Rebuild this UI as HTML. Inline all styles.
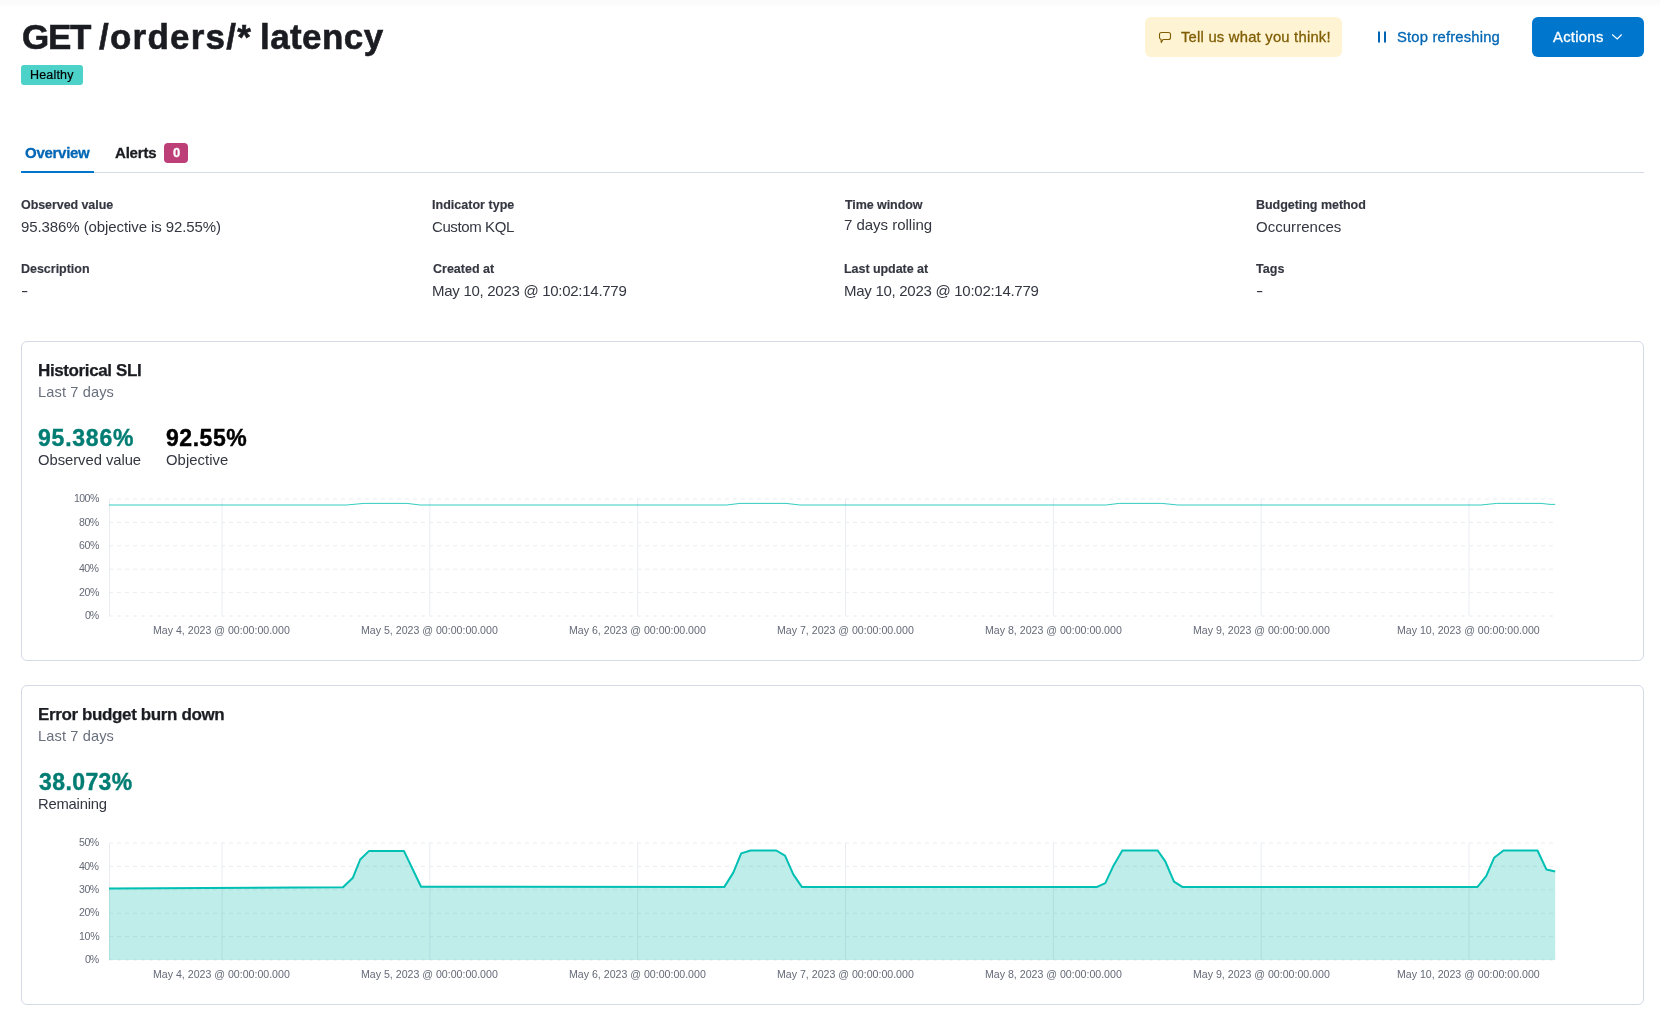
<!DOCTYPE html>
<html lang="en"><head><meta charset="utf-8"><title>GET /orders/* latency</title>
<style>
html,body{margin:0;padding:0;background:#fff;}
body{width:1660px;height:1023px;position:relative;overflow:hidden;font-family:"Liberation Sans", sans-serif;}
.tx{position:absolute;white-space:pre;font-family:"Liberation Sans", sans-serif;will-change:transform;}
.shade{position:absolute;left:0;top:0;width:1660px;height:4px;background:#fbfbfb;border-bottom:2px solid #fdfdfd;}
.badge{position:absolute;left:21px;top:65px;width:62px;height:20px;border-radius:3px;background:#4dd2ca;}
.btn-fb{position:absolute;left:1145px;top:17px;width:197px;height:40px;border-radius:6px;background:#fef3d3;}
.btn-act{position:absolute;left:1532px;top:17px;width:112px;height:40px;border-radius:6px;background:#0077cc;}
.tabline{position:absolute;left:21px;top:172px;width:1623px;height:1px;background:#d3dae6;}
.tabsel{position:absolute;left:21px;top:171px;width:73px;height:2px;background:#0077cc;}
.nbadge{position:absolute;left:164px;top:143px;width:24px;height:20px;border-radius:4px;background:#bd3f78;}
.panel{position:absolute;left:21px;width:1621px;height:318px;border:1px solid #d3dae6;border-radius:6px;background:#fff;}
svg.ch{position:absolute;left:0;top:0;}
h1,dl{margin:0;font-size:inherit;font-weight:inherit;}
</style></head><body>
<div class="shade"></div>
<header class="page-header">
<h1 class="page-title"><span class="tx" style="left:21.51px;top:15px;font-size:35px;line-height:44px;font-weight:700;color:#1a1c21;letter-spacing:-1.302px;-webkit-text-stroke:0.6px #1a1c21">GET</span>
<span class="tx" style="left:98.70px;top:15px;font-size:35px;line-height:44px;font-weight:700;color:#1a1c21;letter-spacing:1.219px;-webkit-text-stroke:0.6px #1a1c21">/orders/*</span>
<span class="tx" style="left:260.31px;top:15px;font-size:35px;line-height:44px;font-weight:700;color:#1a1c21;letter-spacing:0.424px;-webkit-text-stroke:0.6px #1a1c21">latency</span></h1>
<div class="badge" title="Healthy"></div>
<div class="btn-fb" role="button"></div>
<div class="btn-act" role="button"></div>
<svg class="ch" width="1660" height="80" aria-hidden="true">
  <path d="M1161.5,32.5 H1168.5 Q1170.5,32.5 1170.5,34.5 V37.5 Q1170.5,39.5 1168.5,39.5 H1163 L1161.3,42.6 L1161,39.4 Q1159.5,39 1159.5,37.5 V34.5 Q1159.5,32.5 1161.5,32.5 Z" fill="none" stroke="#7f5e05" stroke-width="1.1" stroke-linejoin="round"/>
  <rect x="1378" y="31.5" width="2" height="11" fill="#0066b4"/>
  <rect x="1384" y="31.5" width="2" height="11" fill="#0066b4"/>
  <path d="M1612.2,34.5 L1617.2,39 L1621.7,34.5" fill="none" stroke="#fff" stroke-width="1.1"/>
</svg>
<span class="tx" style="left:30.00px;top:67px;font-size:12.5px;line-height:16px;font-weight:400;color:#000000;letter-spacing:0.178px;-webkit-text-stroke:0.2px #000000">Healthy</span>
<span class="tx" style="left:1180.70px;top:28px;font-size:14.8px;line-height:19px;font-weight:400;color:#7f5e05;letter-spacing:0.219px;-webkit-text-stroke:0.3px #7f5e05">Tell us what you think!</span>
<span class="tx" style="left:1397.40px;top:28px;font-size:14.8px;line-height:19px;font-weight:400;color:#0066b4;letter-spacing:0.176px;-webkit-text-stroke:0.3px #0066b4">Stop refreshing</span>
<span class="tx" style="left:1553.00px;top:28px;font-size:14.8px;line-height:19px;font-weight:400;color:#ffffff;letter-spacing:0.294px;-webkit-text-stroke:0.3px #ffffff">Actions</span>
</header>
<nav class="tabs" role="tablist">
<div class="nbadge"></div>
<div class="tabline"></div>
<div class="tabsel"></div>
<span class="tx" style="left:25.00px;top:143px;font-size:15px;line-height:19px;font-weight:700;color:#0066b4;letter-spacing:-0.277px;-webkit-text-stroke:0.3px #0066b4">Overview</span>
<span class="tx" style="left:115.00px;top:143px;font-size:15px;line-height:19px;font-weight:700;color:#1a1c21;letter-spacing:-0.195px;-webkit-text-stroke:0.3px #1a1c21">Alerts</span>
<span class="tx" style="left:172.70px;top:144px;font-size:13px;line-height:17px;font-weight:700;color:#ffffff;-webkit-text-stroke:0.3px #ffffff">0</span>
</nav>
<dl class="meta">
<span class="tx" style="left:21.10px;top:197px;font-size:12.5px;line-height:16px;font-weight:700;color:#343741;letter-spacing:-0.073px;-webkit-text-stroke:0.15px #343741">Observed value</span>
<span class="tx" style="left:20.90px;top:217px;font-size:15px;line-height:19px;font-weight:400;color:#343741;letter-spacing:-0.090px">95.386% (objective is 92.55%)</span>
<span class="tx" style="left:20.80px;top:261px;font-size:12.5px;line-height:16px;font-weight:700;color:#343741;letter-spacing:-0.023px;-webkit-text-stroke:0.15px #343741">Description</span>
<span class="tx" style="left:21.00px;top:281px;font-size:15px;line-height:19px;font-weight:400;color:#343741;transform:scaleX(1.45);transform-origin:0 0">-</span>
<span class="tx" style="left:432.30px;top:197px;font-size:12.5px;line-height:16px;font-weight:700;color:#343741;letter-spacing:0.023px;-webkit-text-stroke:0.15px #343741">Indicator type</span>
<span class="tx" style="left:432.40px;top:217px;font-size:15px;line-height:19px;font-weight:400;color:#343741;letter-spacing:-0.402px">Custom KQL</span>
<span class="tx" style="left:432.60px;top:261px;font-size:12.5px;line-height:16px;font-weight:700;color:#343741;-webkit-text-stroke:0.15px #343741">Created at</span>
<span class="tx" style="left:431.90px;top:281px;font-size:15px;line-height:19px;font-weight:400;color:#343741;letter-spacing:-0.281px">May 10, 2023 @ 10:02:14.779</span>
<span class="tx" style="left:844.70px;top:197px;font-size:12.5px;line-height:16px;font-weight:700;color:#343741;letter-spacing:-0.072px;-webkit-text-stroke:0.15px #343741">Time window</span>
<span class="tx" style="left:844.10px;top:215px;font-size:15px;line-height:19px;font-weight:400;color:#343741;letter-spacing:-0.018px">7 days rolling</span>
<span class="tx" style="left:844.00px;top:261px;font-size:12.5px;line-height:16px;font-weight:700;color:#343741;letter-spacing:-0.052px;-webkit-text-stroke:0.15px #343741">Last update at</span>
<span class="tx" style="left:843.60px;top:281px;font-size:15px;line-height:19px;font-weight:400;color:#343741;letter-spacing:-0.277px">May 10, 2023 @ 10:02:14.779</span>
<span class="tx" style="left:1255.60px;top:197px;font-size:12.5px;line-height:16px;font-weight:700;color:#343741;letter-spacing:-0.038px;-webkit-text-stroke:0.15px #343741">Budgeting method</span>
<span class="tx" style="left:1255.70px;top:217px;font-size:15px;line-height:19px;font-weight:400;color:#343741;letter-spacing:0.027px">Occurrences</span>
<span class="tx" style="left:1256.30px;top:261px;font-size:12.5px;line-height:16px;font-weight:700;color:#343741;letter-spacing:0.068px;-webkit-text-stroke:0.15px #343741">Tags</span>
<span class="tx" style="left:1255.80px;top:281px;font-size:15px;line-height:19px;font-weight:400;color:#343741;transform:scaleX(1.45);transform-origin:0 0">-</span>
</dl>
<section class="panel" style="top:341px"></section>
<section class="panel" style="top:685px"></section>
<div class="panel-content" id="historical-sli">
<svg class="ch" width="1660" height="1023" aria-hidden="true">
<line x1="109" y1="499.00" x2="1555.2" y2="499.00" stroke="#eaedf2" stroke-width="1" stroke-dasharray="4 4"/>
<line x1="109" y1="522.40" x2="1555.2" y2="522.40" stroke="#eaedf2" stroke-width="1" stroke-dasharray="4 4"/>
<line x1="109" y1="545.80" x2="1555.2" y2="545.80" stroke="#eaedf2" stroke-width="1" stroke-dasharray="4 4"/>
<line x1="109" y1="569.20" x2="1555.2" y2="569.20" stroke="#eaedf2" stroke-width="1" stroke-dasharray="4 4"/>
<line x1="109" y1="592.60" x2="1555.2" y2="592.60" stroke="#eaedf2" stroke-width="1" stroke-dasharray="4 4"/>
<line x1="109" y1="616.00" x2="1555.2" y2="616.00" stroke="#eaedf2" stroke-width="1" stroke-dasharray="4 4"/>
<line x1="109.5" y1="499" x2="109.5" y2="616.5" stroke="#e9edf3" stroke-width="1"/>
<line x1="222.00" y1="499" x2="222.00" y2="616" stroke="#e9edf3" stroke-width="1"/>
<line x1="429.83" y1="499" x2="429.83" y2="616" stroke="#e9edf3" stroke-width="1"/>
<line x1="637.67" y1="499" x2="637.67" y2="616" stroke="#e9edf3" stroke-width="1"/>
<line x1="845.50" y1="499" x2="845.50" y2="616" stroke="#e9edf3" stroke-width="1"/>
<line x1="1053.33" y1="499" x2="1053.33" y2="616" stroke="#e9edf3" stroke-width="1"/>
<line x1="1261.17" y1="499" x2="1261.17" y2="616" stroke="#e9edf3" stroke-width="1"/>
<line x1="1469.00" y1="499" x2="1469.00" y2="616" stroke="#e9edf3" stroke-width="1"/>
<polyline points="109.0,505.0 346.6,505.0 363.9,503.4 406.9,503.4 420.2,505.0 726.6,505.0 740.0,503.4 786.0,503.4 800.0,505.0 1105.8,505.0 1119.2,503.4 1161.8,503.4 1177.9,505.0 1480.8,505.0 1496.8,503.4 1541.0,503.4 1550.0,504.4 1555.2,504.4" fill="none" stroke="#00bfb3" stroke-opacity="0.8" stroke-width="1" stroke-linejoin="round"/>
</svg>
<span class="tx" style="left:37.70px;top:360px;font-size:17px;line-height:22px;font-weight:700;color:#1a1c21;letter-spacing:-0.386px;-webkit-text-stroke:0.25px #1a1c21">Historical SLI</span>
<span class="tx" style="left:37.70px;top:383px;font-size:14.6px;line-height:19px;font-weight:400;color:#69707d;letter-spacing:0.123px">Last 7 days</span>
<span class="tx" style="left:38.30px;top:424px;font-size:23px;line-height:29px;font-weight:700;color:#017d73;letter-spacing:0.775px;-webkit-text-stroke:0.4px #017d73">95.386%</span>
<span class="tx" style="left:38.30px;top:451px;font-size:14.8px;line-height:19px;font-weight:400;color:#343741;letter-spacing:-0.041px">Observed value</span>
<span class="tx" style="left:165.80px;top:424px;font-size:23px;line-height:29px;font-weight:700;color:#000000;letter-spacing:0.529px;-webkit-text-stroke:0.4px #000000">92.55%</span>
<span class="tx" style="left:165.80px;top:451px;font-size:14.8px;line-height:19px;font-weight:400;color:#343741;letter-spacing:0.080px">Objective</span>
<span class="tx" style="left:74.00px;top:491px;font-size:10.6px;line-height:14px;font-weight:400;color:#646a77;letter-spacing:-0.595px">100%</span>
<span class="tx" style="left:79.10px;top:515px;font-size:10.6px;line-height:14px;font-weight:400;color:#646a77;letter-spacing:-0.495px">80%</span>
<span class="tx" style="left:79.00px;top:538px;font-size:10.6px;line-height:14px;font-weight:400;color:#646a77;letter-spacing:-0.445px">60%</span>
<span class="tx" style="left:79.30px;top:561px;font-size:10.6px;line-height:14px;font-weight:400;color:#646a77;letter-spacing:-0.595px">40%</span>
<span class="tx" style="left:79.00px;top:585px;font-size:10.6px;line-height:14px;font-weight:400;color:#646a77;letter-spacing:-0.445px">20%</span>
<span class="tx" style="left:85.10px;top:608px;font-size:10.6px;line-height:14px;font-weight:400;color:#646a77;letter-spacing:-1.095px">0%</span>
<span class="tx" style="left:153.36px;top:623px;font-size:10.6px;line-height:14px;font-weight:400;color:#646a77">May 4, 2023 @ 00:00:00.000</span>
<span class="tx" style="left:361.19px;top:623px;font-size:10.6px;line-height:14px;font-weight:400;color:#646a77">May 5, 2023 @ 00:00:00.000</span>
<span class="tx" style="left:569.02px;top:623px;font-size:10.6px;line-height:14px;font-weight:400;color:#646a77">May 6, 2023 @ 00:00:00.000</span>
<span class="tx" style="left:776.86px;top:623px;font-size:10.6px;line-height:14px;font-weight:400;color:#646a77">May 7, 2023 @ 00:00:00.000</span>
<span class="tx" style="left:984.69px;top:623px;font-size:10.6px;line-height:14px;font-weight:400;color:#646a77">May 8, 2023 @ 00:00:00.000</span>
<span class="tx" style="left:1192.52px;top:623px;font-size:10.6px;line-height:14px;font-weight:400;color:#646a77">May 9, 2023 @ 00:00:00.000</span>
<span class="tx" style="left:1397.41px;top:623px;font-size:10.6px;line-height:14px;font-weight:400;color:#646a77">May 10, 2023 @ 00:00:00.000</span>
</div>
<div class="panel-content" id="error-budget">
<svg class="ch" width="1660" height="1023" aria-hidden="true">
<line x1="109" y1="843.00" x2="1555.2" y2="843.00" stroke="#eaedf2" stroke-width="1" stroke-dasharray="4 4"/>
<line x1="109" y1="866.40" x2="1555.2" y2="866.40" stroke="#eaedf2" stroke-width="1" stroke-dasharray="4 4"/>
<line x1="109" y1="889.80" x2="1555.2" y2="889.80" stroke="#eaedf2" stroke-width="1" stroke-dasharray="4 4"/>
<line x1="109" y1="913.20" x2="1555.2" y2="913.20" stroke="#eaedf2" stroke-width="1" stroke-dasharray="4 4"/>
<line x1="109" y1="936.60" x2="1555.2" y2="936.60" stroke="#eaedf2" stroke-width="1" stroke-dasharray="4 4"/>
<line x1="109" y1="960.00" x2="1555.2" y2="960.00" stroke="#eaedf2" stroke-width="1" stroke-dasharray="4 4"/>
<line x1="109.5" y1="843" x2="109.5" y2="960.5" stroke="#e9edf3" stroke-width="1"/>
<line x1="222.00" y1="843" x2="222.00" y2="960" stroke="#e9edf3" stroke-width="1"/>
<line x1="429.83" y1="843" x2="429.83" y2="960" stroke="#e9edf3" stroke-width="1"/>
<line x1="637.67" y1="843" x2="637.67" y2="960" stroke="#e9edf3" stroke-width="1"/>
<line x1="845.50" y1="843" x2="845.50" y2="960" stroke="#e9edf3" stroke-width="1"/>
<line x1="1053.33" y1="843" x2="1053.33" y2="960" stroke="#e9edf3" stroke-width="1"/>
<line x1="1261.17" y1="843" x2="1261.17" y2="960" stroke="#e9edf3" stroke-width="1"/>
<line x1="1469.00" y1="843" x2="1469.00" y2="960" stroke="#e9edf3" stroke-width="1"/>
<path d="M109.0,960 L109.0,888.6 L343.0,887.3 L352.9,877.7 L360.2,859.5 L369.1,850.9 L403.9,850.9 L421.1,886.7 L724.2,887.1 L733.3,872.6 L741.2,853.4 L750.6,850.5 L776.3,850.5 L785.0,855.6 L793.3,874.4 L802.0,887.1 L1096.6,887.1 L1105.3,883.1 L1113.6,865.4 L1122.3,850.5 L1157.7,850.5 L1165.3,861.4 L1174.0,881.6 L1182.7,887.1 L1477.5,886.9 L1486.2,876.2 L1494.1,857.8 L1503.5,850.5 L1537.5,850.5 L1546.5,869.6 L1555.2,871.5 L1555.2,960 Z" fill="#00b8a6" fill-opacity="0.25"/>
<polyline points="109.0,888.6 343.0,887.3 352.9,877.7 360.2,859.5 369.1,850.9 403.9,850.9 421.1,886.7 724.2,887.1 733.3,872.6 741.2,853.4 750.6,850.5 776.3,850.5 785.0,855.6 793.3,874.4 802.0,887.1 1096.6,887.1 1105.3,883.1 1113.6,865.4 1122.3,850.5 1157.7,850.5 1165.3,861.4 1174.0,881.6 1182.7,887.1 1477.5,886.9 1486.2,876.2 1494.1,857.8 1503.5,850.5 1537.5,850.5 1546.5,869.6 1555.2,871.5" fill="none" stroke="#00bfb3" stroke-opacity="1.0" stroke-width="2" stroke-linejoin="round"/>
</svg>
<span class="tx" style="left:37.70px;top:704px;font-size:17px;line-height:22px;font-weight:700;color:#1a1c21;letter-spacing:-0.374px;-webkit-text-stroke:0.25px #1a1c21">Error budget burn down</span>
<span class="tx" style="left:37.70px;top:727px;font-size:14.6px;line-height:19px;font-weight:400;color:#69707d;letter-spacing:0.123px">Last 7 days</span>
<span class="tx" style="left:38.50px;top:768px;font-size:23px;line-height:29px;font-weight:700;color:#017d73;letter-spacing:0.409px;-webkit-text-stroke:0.4px #017d73">38.073%</span>
<span class="tx" style="left:37.80px;top:795px;font-size:14.8px;line-height:19px;font-weight:400;color:#343741;letter-spacing:-0.215px">Remaining</span>
<span class="tx" style="left:79.10px;top:835px;font-size:10.6px;line-height:14px;font-weight:400;color:#646a77;letter-spacing:-0.495px">50%</span>
<span class="tx" style="left:79.30px;top:859px;font-size:10.6px;line-height:14px;font-weight:400;color:#646a77;letter-spacing:-0.595px">40%</span>
<span class="tx" style="left:79.10px;top:882px;font-size:10.6px;line-height:14px;font-weight:400;color:#646a77;letter-spacing:-0.495px">30%</span>
<span class="tx" style="left:79.00px;top:905px;font-size:10.6px;line-height:14px;font-weight:400;color:#646a77;letter-spacing:-0.445px">20%</span>
<span class="tx" style="left:78.70px;top:929px;font-size:10.6px;line-height:14px;font-weight:400;color:#646a77;letter-spacing:-0.295px">10%</span>
<span class="tx" style="left:85.10px;top:952px;font-size:10.6px;line-height:14px;font-weight:400;color:#646a77;letter-spacing:-1.095px">0%</span>
<span class="tx" style="left:153.36px;top:967px;font-size:10.6px;line-height:14px;font-weight:400;color:#646a77">May 4, 2023 @ 00:00:00.000</span>
<span class="tx" style="left:361.19px;top:967px;font-size:10.6px;line-height:14px;font-weight:400;color:#646a77">May 5, 2023 @ 00:00:00.000</span>
<span class="tx" style="left:569.02px;top:967px;font-size:10.6px;line-height:14px;font-weight:400;color:#646a77">May 6, 2023 @ 00:00:00.000</span>
<span class="tx" style="left:776.86px;top:967px;font-size:10.6px;line-height:14px;font-weight:400;color:#646a77">May 7, 2023 @ 00:00:00.000</span>
<span class="tx" style="left:984.69px;top:967px;font-size:10.6px;line-height:14px;font-weight:400;color:#646a77">May 8, 2023 @ 00:00:00.000</span>
<span class="tx" style="left:1192.52px;top:967px;font-size:10.6px;line-height:14px;font-weight:400;color:#646a77">May 9, 2023 @ 00:00:00.000</span>
<span class="tx" style="left:1397.41px;top:967px;font-size:10.6px;line-height:14px;font-weight:400;color:#646a77">May 10, 2023 @ 00:00:00.000</span>
</div>
</body></html>
